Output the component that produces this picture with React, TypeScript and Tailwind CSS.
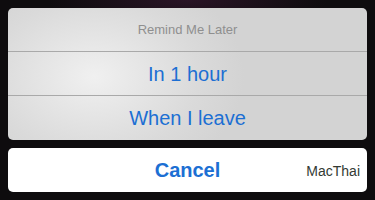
import React from "react";

const options = ["In 1 hour", "When I leave"];

export default function App() {
  return (
    <div className="h-[200px] w-[375px] overflow-hidden bg-[radial-gradient(ellipse_140px_30px_at_50%_0%,#2a1426,#0e0c0e)] px-2 pt-2 font-['Liberation_Sans',Arial,sans-serif]">
      <div className="overflow-hidden rounded-[5px] bg-[radial-gradient(ellipse_150px_110px_at_24%_52%,#f0f0f0,#dadada_70%,#d3d3d3)]">
        <div className="flex h-[44px] items-center justify-center border-b border-[#a9a9a9] text-[13px] text-[#8f8f8f]">
          Remind Me Later
        </div>
        {options.map((label, i) => (
          <div
            key={label}
            className={`flex h-[44px] items-center justify-center text-[20px] text-[#1c6fd3] ${
              i === 0 ? "border-b border-[#a9a9a9]" : ""
            }`}
          >
            {label}
          </div>
        ))}
      </div>
      <div className="relative mt-2 flex h-[44px] items-center justify-center rounded-[5px] bg-white">
        <span className="text-[20px] font-bold text-[#1c6fd3]">Cancel</span>
        <span className="absolute right-[7px] top-[13px] text-[14px] text-[#333a33]">MacThai</span>
      </div>
    </div>
  );
}
